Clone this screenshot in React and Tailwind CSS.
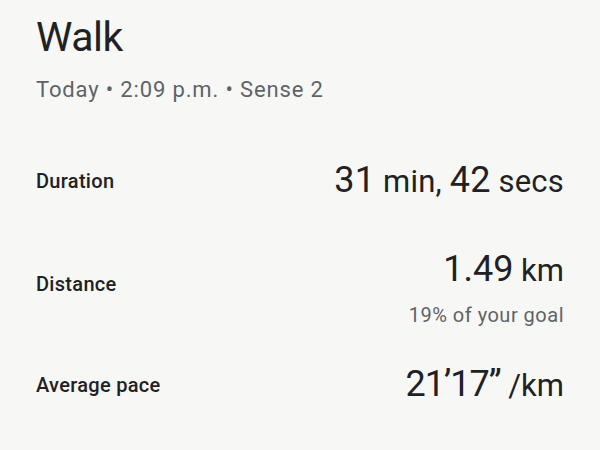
export default function App() {
    return (
        <div className="h-[450px] w-[600px] overflow-hidden bg-[#f7f8f6] px-9 pt-[12px] text-[#202124]" style={{ fontFamily: 'Roboto, "Open Sans", sans-serif' }}>
            <h1 className="text-[41px] leading-[50px] tracking-[-0.5px]">Walk</h1>
            <p className="mt-[14px] text-[22px] leading-[28px] tracking-[0.85px] text-[#5f6368]">Today • 2:09 p.m. • Sense 2</p>

            <div className="mt-[56px] flex items-center justify-between">
                <span className="text-[20px] font-medium tracking-[0.3px]">Duration</span>
                <span className="text-[31px] leading-[40px] tracking-[0.2px]">
                    <span className="text-[36px]">31</span> min, <span className="text-[36px]">42</span> secs
                </span>
            </div>

            <div className="mt-[47px] flex items-start justify-between">
                <span className="mt-[20px] text-[20px] font-medium tracking-[0.3px]">Distance</span>
                <div className="flex flex-col items-end">
                    <span className="text-[31px] leading-[40px]">
                        <span className="text-[36px]">1.49</span> km
                    </span>
                    <span className="mt-[12px] text-[20px] leading-[24px] tracking-[0.5px] text-[#5f6368]">19% of your goal</span>
                </div>
            </div>

            <div className="mt-[37px] flex items-center justify-between">
                <span className="text-[20px] font-medium tracking-[0.3px]">Average pace</span>
                <span className="text-[31px] leading-[40px]">
                    <span className="text-[36px] tracking-[-1px]">21’17”</span> /km
                </span>
            </div>
        </div>
    );
}
